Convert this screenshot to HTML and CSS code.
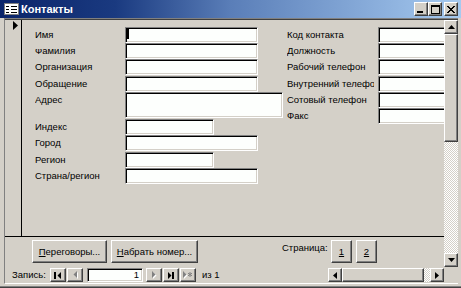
FILE: index.html
```html
<!DOCTYPE html>
<html><head><meta charset="utf-8"><link rel="stylesheet" href="styles.css"></head>
<body>
<div class="window">
  <div class="titlebar">
    <svg class="appicon" width="16" height="14" viewBox="0 0 16 14"><rect x="0.5" y="1.5" width="14" height="11" fill="#fff" stroke="#808080"/><path d="M2 4.5h3M7 4.5h6M2 7.5h3M7 7.5h6M2 10.5h3M7 10.5h6" stroke="#000"/></svg>
    <span class="title">Контакты</span>
    <div class="tbtns">
      <div class="tbtn raised"><svg width="8" height="7" viewBox="0 0 8 7"><rect x="0" y="5" width="6" height="2"/></svg></div>
      <div class="tbtn raised max"><svg width="9" height="9" viewBox="0 0 9 9"><path fill-rule="evenodd" d="M0 0h9v9H0zM1 2v6h7V2z"/></svg></div>
      <div class="tbtn raised"><svg width="8" height="7" viewBox="0 0 8 7"><path d="M0 0h2v1H0zM6 0h2v1H6zM1 1h2v1H1zM5 1h2v1H5zM2 2h4v1H2zM3 3h2v1H3zM2 4h4v1H2zM1 5h2v1H1zM5 5h2v1H5zM0 6h2v1H0zM6 6h2v1H6z"/></svg></div>
    </div>
  </div>
  <div class="client">
    <div class="upper">
      <div class="form">
        <div class="detail">
          <div class="selector"><svg width="5" height="9" viewBox="0 0 5 9"><path d="M0 0L5 4.5L0 9z"/></svg></div>
          <div class="content">
            <div class="left">
              <div class="lbl">Имя</div><div class="tb w133"><span class="caret"></span></div>
              <div class="lbl clipped">Фамилия</div><div class="tb w133"></div>
              <div class="lbl">Организация</div><div class="tb w133"></div>
              <div class="lbl">Обращение</div><div class="tb w133"></div>
              <div class="lbl">Адрес</div><div class="tb w158"></div>
              <div class="lbl">Индекс</div><div class="tb w89"></div>
              <div class="lbl">Город</div><div class="tb w133"></div>
              <div class="lbl">Регион</div><div class="tb w89"></div>
              <div class="lbl">Страна/регион</div><div class="tb w133"></div>
            </div>
            <div class="right">
              <div class="lbl">Код контакта</div><div class="tb wr"></div>
              <div class="lbl">Должность</div><div class="tb wr"></div>
              <div class="lbl">Рабочий телефон</div><div class="tb wr"></div>
              <div class="lbl">Внутренний телефон</div><div class="tb wr"></div>
              <div class="lbl">Сотовый телефон</div><div class="tb wr"></div>
              <div class="lbl">Факс</div><div class="tb wr"></div>
            </div>
          </div>
        </div>
        <div class="footer">
          <div class="btn raised b1"><span><u>П</u>ереговоры...</span></div>
          <div class="btn raised b2"><span><u>Н</u>абрать номер...</span></div>
          <div class="pagelbl">Страница:</div>
          <div class="btn raised pbtn"><u>1</u></div>
          <div class="btn raised pbtn"><u>2</u></div>
        </div>
      </div>
      <div class="vscroll">
        <div class="sbtn raised"><svg width="7" height="4" viewBox="0 0 7 4"><path d="M3.5 0L7 4H0z"/></svg></div>
        <div class="vthumb raised"></div>
        <div class="track"></div>
        <div class="sbtn raised"><svg width="7" height="4" viewBox="0 0 7 4"><path d="M0 0h7L3.5 4z"/></svg></div>
      </div>
    </div>
    <div class="lower">
      <div class="nav">
        <div class="navlbl">Запись:</div>
        <div class="nb raised"><svg width="8" height="7" viewBox="0 0 8 7"><path d="M0 0h2v7H0zM7 0v7L3.5 3.5z"/></svg></div>
        <div class="nb raised prev"><svg width="5" height="8" viewBox="0 0 5 8"><path fill="#fff" d="M5 1v7L1.5 4.5z"/><path fill="#808080" d="M4 0v7L0.5 3.5z"/></svg></div>
        <div class="recfield">1</div>
        <div class="nb raised next"><svg width="5" height="8" viewBox="0 0 5 8"><path fill="#fff" d="M1 1v7l3.5-3.5z"/><path fill="#808080" d="M0 0v7l3.5-3.5z"/></svg></div>
        <div class="nb raised gap1"><svg width="8" height="7" viewBox="0 0 8 7"><path d="M1 0v7l3.5-3.5zM5 0h2v7H5z"/></svg></div>
        <div class="nb raised gap1"><svg width="10" height="8" viewBox="0 0 10 8"><path fill="#fff" d="M1 1v7l3.5-3.5z"/><path fill="#808080" d="M0 0v7l3.5-3.5z"/><path stroke="#808080" stroke-width="1" fill="none" d="M7 1v5M5 2.2l4 2.6M9 2.2l-4 2.6"/></svg></div>
        <div class="of">из 1</div>
      </div>
      <div class="hscroll">
        <div class="sbtn raised"><svg width="4" height="7" viewBox="0 0 4 7"><path d="M4 0v7L0 3.5z"/></svg></div>
        <div class="hthumb raised"></div>
        <div class="track"></div>
        <div class="sbtn raised"><svg width="4" height="7" viewBox="0 0 4 7"><path d="M0 0v7l4-3.5z"/></svg></div>
      </div>
      <div class="corner"></div>
    </div>
  </div>
</div>
</body></html>
```
FILE: styles.css
```css
* { box-sizing: border-box; margin: 0; padding: 0; }
html, body { width: 461px; height: 288px; overflow: hidden; }
body {
  background: #d4d0c8;
  font-family: "Liberation Sans", Arial, sans-serif;
  font-size: 9.5px;
  color: #000;
}
svg { display: block; }
.window {
  width: 461px;
  height: 288px;
  display: flex;
  flex-direction: column;
  background: #d4d0c8;
  border-bottom: 1px solid #404040;
  box-shadow: inset 0 -1px #808080;
}
.titlebar {
  height: 18px;
  flex: none;
  display: flex;
  align-items: center;
  padding: 0 3px 0 4px;
  background: linear-gradient(to right, #0a246a, #1a3a80 25%, #5a7eb8 50%, #a6caf0);
}
.appicon { margin-right: 1px; }
.title { color: #fff; font-weight: bold; font-size: 11px; line-height: 14px; }
.tbtns { margin-left: auto; display: flex; }
.raised {
  background: #d4d0c8;
  border: 1px solid;
  border-color: #fff #404040 #404040 #fff;
  box-shadow: inset -1px -1px #808080;
}
.tbtn {
  width: 14px;
  height: 14px;
  display: flex;
  align-items: center;
  justify-content: center;
}
.tbtn.max { margin-right: 2px; }
.client {
  flex: none;
  height: 266px;
  margin: 0 3px 0 4px;
  border-top: 1px solid #808080;
  border-left: 1px solid #808080;
  border-bottom: 1px solid #fff;
  display: flex;
  flex-direction: column;
}
.upper { height: 248px; flex: none; border-top: 1px solid #404040; display: flex; }
.form { width: 439px; display: flex; flex-direction: column; }
.detail { height: 217px; flex: none; border-bottom: 1px solid #000; display: flex; }
.selector { width: 17px; flex: none; border-right: 1px solid #000; padding: 1px 0 0 8px; }
.content { flex: 1; display: flex; overflow: hidden; padding: 7px 0 0 13px; }
.left {
  display: grid;
  grid-template-columns: 90px 158px;
  grid-template-rows: 16px 16px 17px 16px 27px 16px 17px 16px 16px;
  align-items: start;
}
.right {
  margin-left: 4px;
  display: grid;
  grid-template-columns: 91px 80px;
  grid-template-rows: 16px 16px 17px 16px 16px 16px;
  align-items: start;
}
.lbl { line-height: 16px; white-space: nowrap; overflow: hidden; }
.right .lbl { width: 87px; }
.clipped { clip-path: inset(6px 0 0 0); }
.tb {
  height: 16px;
  background: #fdfffd;
  border: 1px solid;
  border-color: #808080 #fff #fff #808080;
  box-shadow: inset 1px 1px #000, inset -1px -1px #d4d0c8;
}
.w133 { width: 133px; }
.w158 { width: 158px; height: 26px; }
.w89 { width: 89px; }
.wr { width: 80px; }
.caret { display: block; width: 2px; height: 10px; margin: 1px 0 0 1px; background: #000; }
.footer { height: 30px; flex: none; display: flex; align-items: flex-start; padding: 3px 0 0 27px; }
.btn {
  height: 23px;
  display: flex;
  align-items: center;
  justify-content: center;
  white-space: nowrap;
}
.b1 { width: 75px; margin-right: 4px; }
.b2 { width: 87px; }
.pagelbl { margin-left: 84px; width: 49px; line-height: 16px; }
.pbtn { width: 21px; }
.pbtn + .pbtn { margin-left: 4px; }
.vscroll { width: 14px; display: flex; flex-direction: column; }
.sbtn {
  width: 14px;
  height: 14px;
  flex: none;
  display: flex;
  align-items: center;
  justify-content: center;
}
.vthumb { height: 108px; flex: none; }
.track {
  flex: 1;
  background: repeating-conic-gradient(#fff 0 25%, #d4d0c8 0 50%) 0 0 / 2px 2px;
}
.lower { height: 16px; flex: none; display: flex; }
.nav { width: 323px; display: flex; align-items: flex-start; padding: 1px 0 0 7px; }
.navlbl { width: 38px; line-height: 14px; }
.nb {
  width: 16px;
  height: 14px;
  display: flex;
  align-items: center;
  justify-content: center;
}
.nb.prev { margin-left: 1px; }
.nb.next { margin-left: 3px; }
.nb.gap1 { margin-left: 1px; }
.recfield {
  margin-left: 4px;
  width: 56px;
  height: 14px;
  background: #fdfffd;
  border: 1px solid;
  border-color: #808080 #fff #fff #808080;
  box-shadow: inset 1px 1px #000, inset -1px -1px #d4d0c8;
  text-align: right;
  padding-right: 3px;
  line-height: 12px;
}
.of { margin-left: 6px; line-height: 14px; }
.hscroll { width: 116px; height: 14px; margin-top: 1px; display: flex; }
.hthumb { width: 82px; flex: none; }
.corner { width: 14px; }
```
